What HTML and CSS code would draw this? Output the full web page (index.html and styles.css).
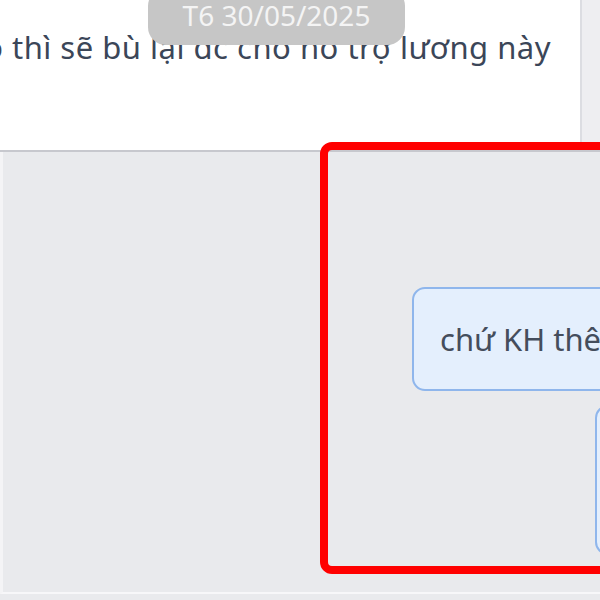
FILE: index.html
```html
<!DOCTYPE html>
<html lang="vi">
<head>
<meta charset="utf-8">
<link rel="stylesheet" href="styles.css">
</head>
<body>
<div class="screen">
  <div class="top">
    <div class="card">
      <p class="msg">vào thì sẽ bù lại đc cho nó trợ lương này</p>
      <div class="date">T6 30/05/2025</div>
    </div>
    <div class="scroll"></div>
  </div>
  <div class="divider"></div>
  <div class="chat">
    <div class="bubble first">chứ KH thêm không được</div>
    <div class="bubble second"></div>
  </div>
  <div class="highlight"></div>
</div>
</body>
</html>
```
FILE: styles.css
```css
html, body {
  margin: 0;
  padding: 0;
}
body {
  width: 600px;
  height: 600px;
  overflow: hidden;
  background: #e9eaed;
  font-family: "Noto Sans", "Open Sans", sans-serif;
}
.screen {
  position: relative;
  width: 600px;
  height: 600px;
  overflow: hidden;
  display: flex;
  flex-direction: column;
}
.top {
  display: flex;
  height: 150px;
  flex: none;
}
.card {
  position: relative;
  flex: 1;
  background: #ffffff;
  overflow: hidden;
}
.msg {
  margin: 0;
  padding-top: 26px;
  margin-left: -50px;
  white-space: nowrap;
  font-size: 31px;
  letter-spacing: 0.5px;
  line-height: 42px;
  color: #3b4658;
}
.date {
  position: absolute;
  left: 148px;
  top: -12px;
  width: 257px;
  height: 57px;
  box-sizing: border-box;
  padding-top: 8px;
  border-radius: 18px;
  background: #c6c6c6;
  color: #f4f4f4;
  font-size: 28px;
  line-height: 38px;
  text-align: center;
}
.scroll {
  width: 18px;
  flex: none;
  background: #eeeef1;
  border-left: 2px solid #dcdde2;
}
.divider {
  height: 2px;
  flex: none;
  background: #c7c8ce;
}
.chat {
  flex: 1;
  display: flex;
  flex-direction: column;
  align-items: flex-start;
  gap: 14px;
  padding-top: 135px;
  border-left: 3px solid #f4f4f6;
  border-bottom: 2px solid #f7f7f9;
  margin-bottom: 6px;
  overflow: hidden;
}
.bubble {
  flex: none;
  box-sizing: border-box;
  border: 2px solid #8fb6ec;
  border-radius: 13px;
  background: #e4effd;
  color: #444d5c;
  font-size: 31px;
  line-height: 42px;
  white-space: nowrap;
}
.first {
  margin-left: 409px;
  height: 104px;
  padding: 29px 26px 0 26px;
}
.second {
  margin-left: 592px;
  width: 200px;
  height: 150px;
}
.highlight {
  position: absolute;
  left: 320px;
  top: 142px;
  width: 300px;
  height: 432px;
  box-sizing: border-box;
  border: 8px solid #ff0000;
  border-radius: 12px;
}
```
